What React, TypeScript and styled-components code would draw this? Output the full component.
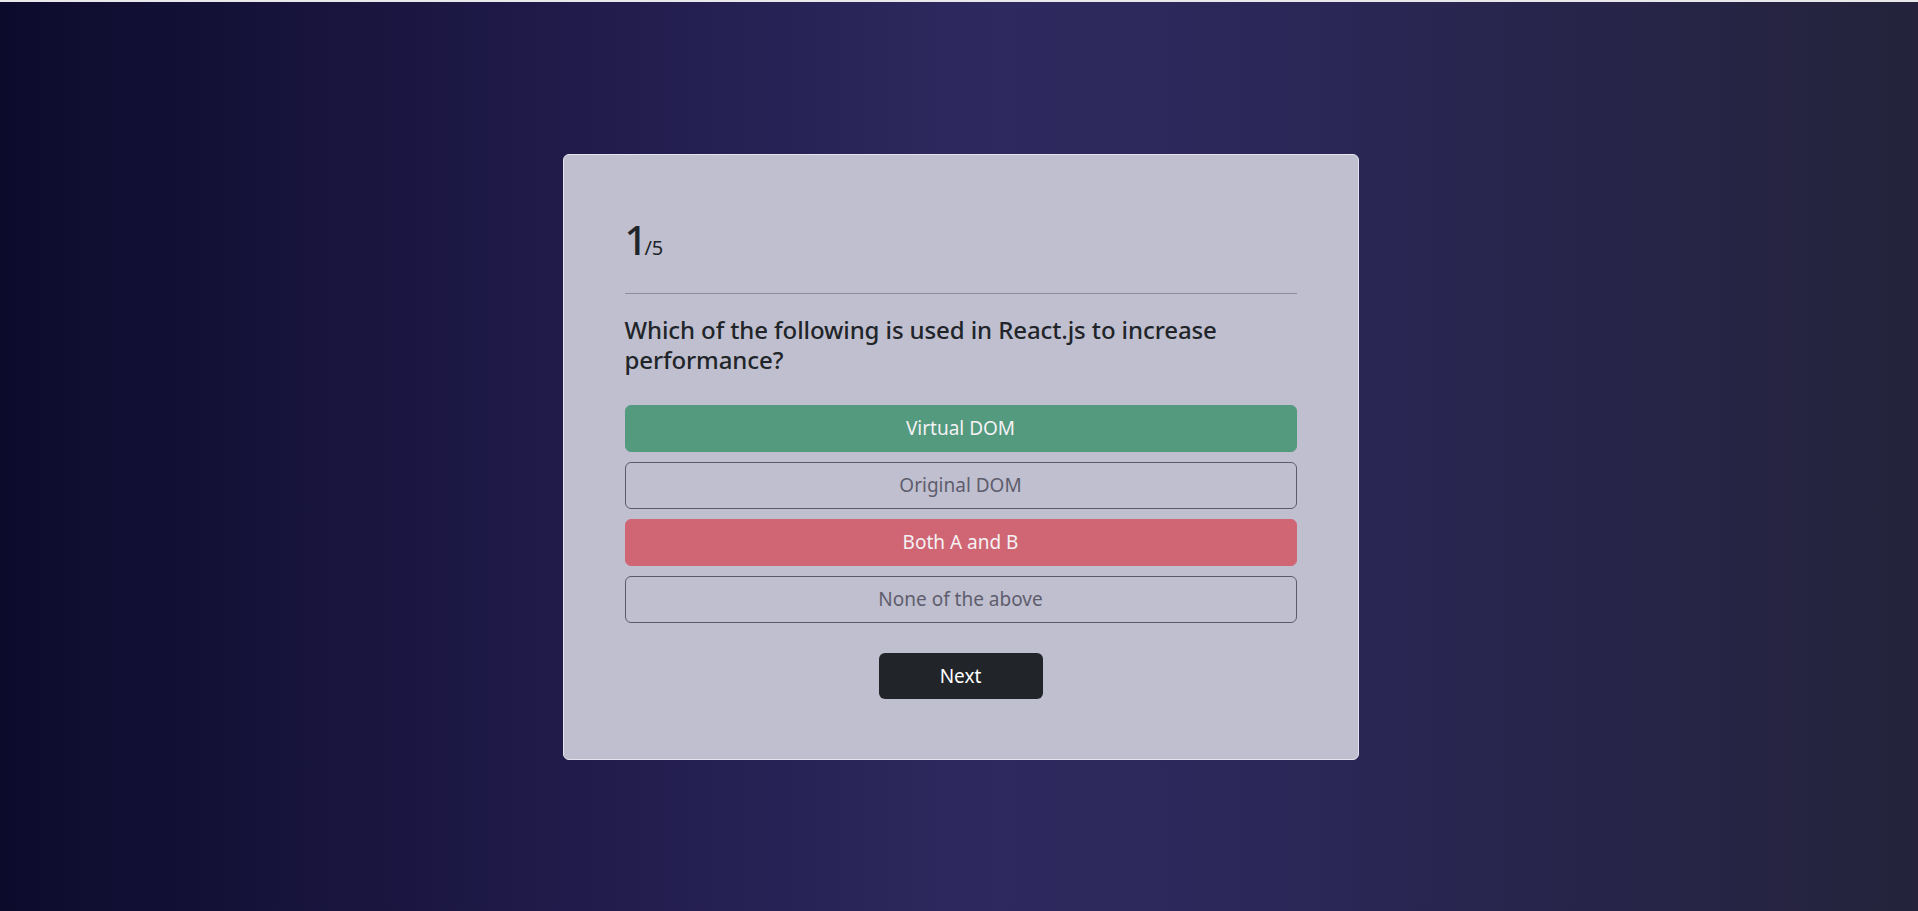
import styled, { createGlobalStyle } from "styled-components";

const GlobalStyle = createGlobalStyle`
  html, body {
    margin: 0;
    padding: 0;
  }
  body {
    font-family: "Noto Sans", "Open Sans", sans-serif;
    color: #212529;
  }
  * {
    box-sizing: border-box;
  }
`;

const Page = styled.main`
  min-height: 911px;
  padding-left: 3px;
  border-top: 2px solid #e9e9ec;
  display: flex;
  justify-content: center;
  align-items: center;
  background: linear-gradient(
    90deg,
    #0d0b2c 0%,
    #1f1a48 28%,
    #2e2a60 52%,
    #2a2655 70%,
    #24233b 100%
  );
`;

const Card = styled.section`
  width: 796px;
  padding: 61px 61px 60px;
  background: #c0bfcf;
  border: 1px solid #e4e3ee;
  border-radius: 6px;
  display: flex;
  flex-direction: column;
`;

const Count = styled.h1`
  margin: 0;
  font-size: 40px;
  line-height: 48px;
  font-weight: 500;
  color: #212529;
`;

const Total = styled.span`
  margin-left: -3px;
  font-size: 20px;
  font-weight: 400;
`;

const Divider = styled.hr`
  margin: 21px 0 21px;
  border: 0;
  border-top: 1px solid #8e8d9c;
`;

const Question = styled.h4`
  margin: 0 0 30px;
  font-size: 24px;
  line-height: 30px;
  font-weight: 500;
  letter-spacing: -0.1px;
  color: #212529;
`;

const Options = styled.div`
  display: flex;
  flex-direction: column;
  gap: 10px;
`;

const Option = styled.button<{ $state?: "correct" | "wrong" }>`
  height: 47px;
  width: 100%;
  border-radius: 6px;
  font-family: inherit;
  font-size: 19px;
  cursor: pointer;
  border: 1px solid
    ${(p) =>
      p.$state === "correct"
        ? "#539a7e"
        : p.$state === "wrong"
        ? "#d06673"
        : "#5c5b6b"};
  background: ${(p) =>
    p.$state === "correct"
      ? "#539a7e"
      : p.$state === "wrong"
      ? "#d06673"
      : "transparent"};
  color: ${(p) => (p.$state ? "#f4f1f4" : "#5e5d6d")};
`;

const Footer = styled.div`
  display: flex;
  justify-content: center;
  margin-top: 30px;
`;

const NextButton = styled.button`
  width: 164px;
  height: 46px;
  border: 0;
  border-radius: 6px;
  background: #212529;
  color: #ffffff;
  font-family: inherit;
  font-size: 19px;
  cursor: pointer;
`;

const options: { text: string; state?: "correct" | "wrong" }[] = [
  { text: "Virtual DOM", state: "correct" },
  { text: "Original DOM" },
  { text: "Both A and B", state: "wrong" },
  { text: "None of the above" },
];

export default function App() {
  return (
    <>
      <GlobalStyle />
      <Page>
        <Card>
          <Count>
            1<Total>/5</Total>
          </Count>
          <Divider />
          <Question>
            Which of the following is used in React.js to increase performance?
          </Question>
          <Options>
            {options.map((o) => (
              <Option key={o.text} $state={o.state}>
                {o.text}
              </Option>
            ))}
          </Options>
          <Footer>
            <NextButton>Next</NextButton>
          </Footer>
        </Card>
      </Page>
    </>
  );
}
